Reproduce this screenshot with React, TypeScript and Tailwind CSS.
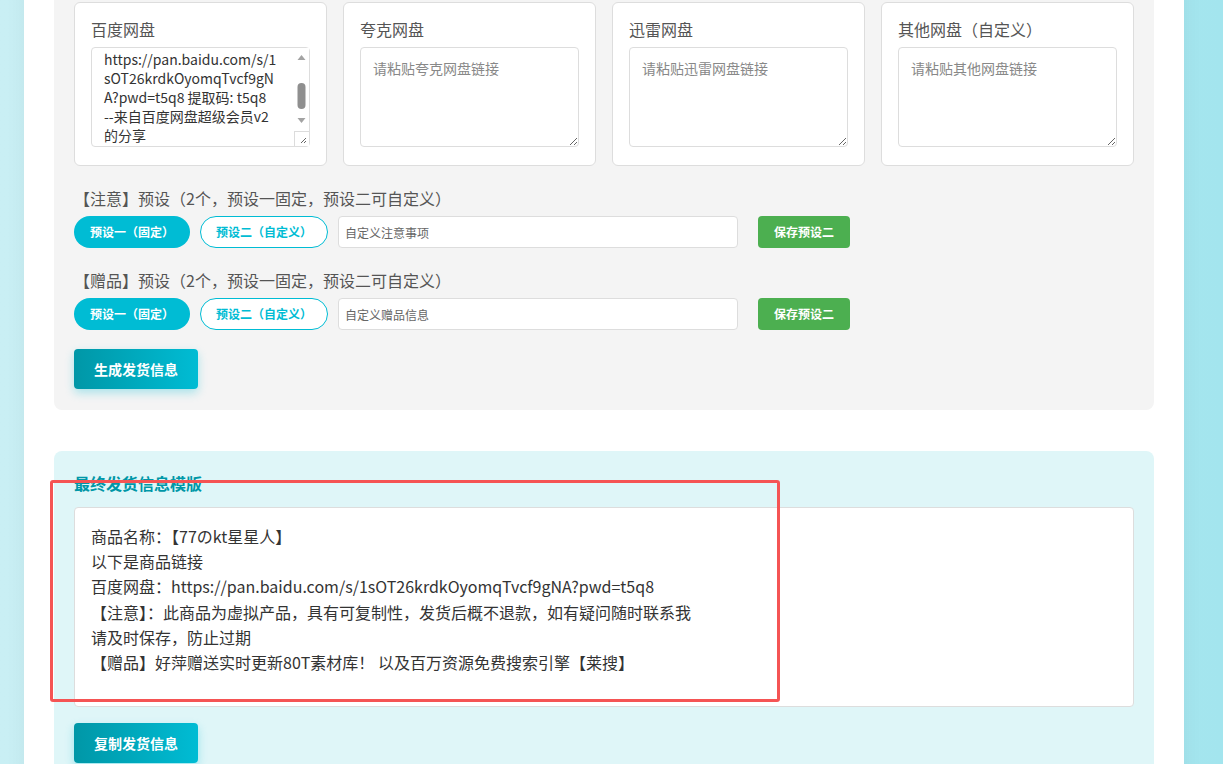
import { useEffect, useRef, useState } from "react";

const pans = [
  { name: "百度网盘", placeholder: "请粘贴百度网盘链接" },
  { name: "夸克网盘", placeholder: "请粘贴夸克网盘链接" },
  { name: "迅雷网盘", placeholder: "请粘贴迅雷网盘链接" },
  { name: "其他网盘（自定义）", placeholder: "请粘贴其他网盘链接" },
];

const resultLines = [
  "商品名称：【77のkt星星人】",
  "以下是商品链接",
  "百度网盘：https://pan.baidu.com/s/1sOT26krdkOyomqTvcf9gNA?pwd=t5q8",
  "【注意】：此商品为虚拟产品，具有可复制性，发货后概不退款，如有疑问随时联系我",
  "请及时保存，防止过期",
  "【赠品】好萍赠送实时更新80T素材库！ 以及百万资源免费搜索引擎【莱搜】",
];

export default function App() {
  const [links, setLinks] = useState<string[]>([
    "https://pan.baidu.com/s/1sOT26krdkOyomqTvcf9gNA?pwd=t5q8 提取码: t5q8\n--来自百度网盘超级会员v2的分享",
    "",
    "",
    "",
  ]);
  const [note, setNote] = useState("");
  const [gift, setGift] = useState("");
  const firstRef = useRef<HTMLTextAreaElement>(null);

  // 截图里百度网盘那栏已经往下滚了一点
  useEffect(() => {
    if (firstRef.current) firstRef.current.scrollTop = 9;
  }, []);

  return (
    <div className="min-h-screen overflow-hidden bg-linear-to-r from-[#c9eff4] to-[#a3e5ee] font-['Noto_Sans_CJK_SC','Noto_Sans',sans-serif]">
      <div className="ml-6 -mt-[18px] w-[1160px] bg-white px-[30px] pb-10 shadow-[0_0_20px_rgba(0,0,0,0.05)]">
        {/* 链接输入区 */}
        <div className="rounded-lg bg-[#f4f4f4] px-5 pt-5 pb-[21px]">
          <div className="grid grid-cols-4 gap-4">
            {pans.map((p, i) => (
              <div key={p.name} className="rounded-md border border-[#dddddd] bg-white px-4 pt-[14px] pb-[18px]">
                <label className="mb-[6px] block text-[16px] leading-6 text-[#555]">{p.name}</label>
                <div className="relative">
                  <textarea
                    ref={i === 0 ? firstRef : undefined}
                    value={links[i]}
                    onChange={(e) => setLinks(links.map((l, j) => (j === i ? e.target.value : l)))}
                    placeholder={p.placeholder}
                    className={`block h-[100px] w-full rounded border border-[#dddddd] py-[11px] pl-3 text-[14px] leading-[19px] text-[#333] placeholder:text-[#888] outline-none ${
                      i === 0 ? "pr-[27px]" : "pr-3"
                    }`}
                  />
                  {i === 0 && <FakeScrollbar />}
                </div>
              </div>
            ))}
          </div>

          <PresetRow
            title="【注意】预设（2个，预设一固定，预设二可自定义）"
            placeholder="自定义注意事项"
            value={note}
            onChange={setNote}
          />
          <PresetRow
            title="【赠品】预设（2个，预设一固定，预设二可自定义）"
            placeholder="自定义赠品信息"
            value={gift}
            onChange={setGift}
          />

          <button className="mt-[19px] h-10 w-[124px] rounded bg-linear-to-r from-[#0097a7] to-[#00bcd4] text-[14px] font-bold text-white shadow-[0_4px_10px_rgba(0,188,212,0.3)]">
            生成发货信息
          </button>
        </div>

        {/* 最终模版 */}
        <div className="relative mt-[41px] rounded-lg bg-[#dff6f8] px-5 pt-5 pb-6">
          <h3 className="mb-3 text-[16px] leading-6 font-bold text-[#0097a7]">最终发货信息模版</h3>
          <div className="h-[200px] rounded border border-[#dddddd] bg-white px-4 py-4 text-[16px] leading-[25.2px] text-[#333]">
            {resultLines.map((line) => (
              <div key={line}>{line}</div>
            ))}
          </div>
          <button className="mt-4 h-10 w-[124px] rounded bg-linear-to-r from-[#0097a7] to-[#00bcd4] text-[14px] font-bold text-white shadow-[0_4px_10px_rgba(0,188,212,0.3)]">
            复制发货信息
          </button>

          {/* 标注框 */}
          <div className="pointer-events-none absolute top-[29px] -left-[4px] h-[222px] w-[730px] rounded-[3px] border-[3px] border-[#f55454]" />
        </div>
      </div>
    </div>
  );
}

// textarea 的滚动条（截图里是经典样式）
function FakeScrollbar() {
  return (
    <div className="pointer-events-none absolute top-[1px] right-[1px] flex w-[15px] flex-col">
      <svg width="15" height="83" viewBox="0 0 15 83">
        <rect width="15" height="83" fill="#ffffff" />
        <polygon points="3.5,12 7.5,7 11.5,12" fill="#a3a3a3" />
        <rect x="3.5" y="35" width="8" height="26" rx="4" fill="#8f8f8f" />
        <polygon points="3.5,70 11.5,70 7.5,75" fill="#a3a3a3" />
      </svg>
      <svg width="15" height="15" viewBox="0 0 15 15">
        <rect width="15" height="15" fill="#ffffff" />
        <path d="M0.5 0 V15 M0 0.5 H15" stroke="#dcdcdc" />
        <path d="M12 7 L7 12 M12 10 L10 12" stroke="#666" strokeWidth="1" />
      </svg>
    </div>
  );
}

function PresetRow({ title, placeholder, value, onChange }: any) {
  return (
    <div>
      <div className="mt-5 mb-[6px] text-[16px] leading-6 text-[#555]">{title}</div>
      <div className="flex items-center">
        <button className="h-8 w-[116px] rounded-full bg-[#00bcd4] text-[12px] font-bold text-white">预设一（固定）</button>
        <button className="ml-[10px] h-8 w-[128px] rounded-full border border-[#00bcd4] bg-white text-[12px] font-bold text-[#00bcd4]">
          预设二（自定义）
        </button>
        <input
          value={value}
          onChange={(e) => onChange(e.target.value)}
          placeholder={placeholder}
          className="ml-[10px] h-8 w-[400px] rounded border border-[#dddddd] bg-white px-[6px] text-[12px] text-[#333] placeholder:text-[#666] outline-none"
        />
        <button className="ml-5 h-8 w-[92px] rounded bg-[#4caf50] text-[12px] font-bold text-white">保存预设二</button>
      </div>
    </div>
  );
}
